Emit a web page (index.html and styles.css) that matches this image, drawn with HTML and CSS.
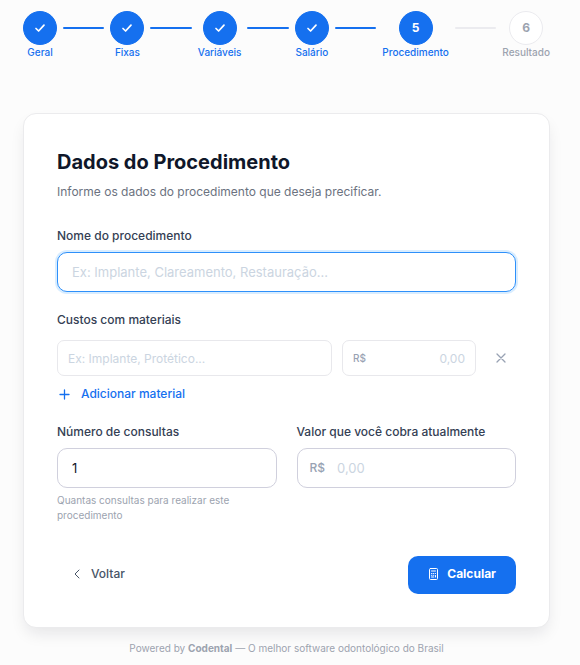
FILE: index.html
```html
<!DOCTYPE html>
<html lang="pt-BR">
<head>
<meta charset="utf-8">
<meta name="viewport" content="width=device-width, initial-scale=1">
<title>Dados do Procedimento</title>
<link rel="stylesheet" href="styles.css">
</head>
<body>

<div class="page">
  <ol class="stepper">
    <li class="step done">
      <span class="circle"><svg width="12" height="12" viewBox="0 0 12 12"><path d="M2 6.5 L4.6 9 L10 3.2"/></svg></span>
      <span class="step-label">Geral</span>
    </li>
    <li class="line done" aria-hidden="true"></li>
    <li class="step done">
      <span class="circle"><svg width="12" height="12" viewBox="0 0 12 12"><path d="M2 6.5 L4.6 9 L10 3.2"/></svg></span>
      <span class="step-label">Fixas</span>
    </li>
    <li class="line done" aria-hidden="true"></li>
    <li class="step done">
      <span class="circle"><svg width="12" height="12" viewBox="0 0 12 12"><path d="M2 6.5 L4.6 9 L10 3.2"/></svg></span>
      <span class="step-label">Variáveis</span>
    </li>
    <li class="line done" aria-hidden="true"></li>
    <li class="step done">
      <span class="circle"><svg width="12" height="12" viewBox="0 0 12 12"><path d="M2 6.5 L4.6 9 L10 3.2"/></svg></span>
      <span class="step-label">Salário</span>
    </li>
    <li class="line done" aria-hidden="true"></li>
    <li class="step done" aria-current="step">
      <span class="circle">5</span>
      <span class="step-label">Procedimento</span>
    </li>
    <li class="line" aria-hidden="true"></li>
    <li class="step">
      <span class="circle">6</span>
      <span class="step-label">Resultado</span>
    </li>
  </ol>

  <form class="card">
    <h1>Dados do Procedimento</h1>
    <p class="subtitle">Informe os dados do procedimento que deseja precificar.</p>

    <div class="field">
      <label for="nome">Nome do procedimento</label>
      <input type="text" id="nome" class="input active" placeholder="Ex: Implante, Clareamento, Restauração...">
    </div>

    <div class="materials">
      <label for="material">Custos com materiais</label>
      <div class="material-row">
        <input type="text" id="material" class="input small" placeholder="Ex: Implante, Protético...">
        <div class="money small">
          <label class="prefix" for="custo">R$</label>
          <input type="text" id="custo" placeholder="0,00">
        </div>
        <button type="button" class="remove" aria-label="Remover material">
          <svg width="10" height="10" viewBox="0 0 10 10"><path d="M1 1 L9 9 M9 1 L1 9"/></svg>
        </button>
      </div>
      <button type="button" class="add">
        <svg width="11" height="12" viewBox="0 0 11 12"><path d="M5.5 2 V11 M1 6.5 H10"/></svg>
        Adicionar material
      </button>
    </div>

    <div class="columns">
      <div class="field">
        <label for="consultas">Número de consultas</label>
        <input type="text" id="consultas" class="input" value="1" inputmode="numeric">
        <p class="help">Quantas consultas para realizar este procedimento</p>
      </div>
      <div class="field">
        <label for="valor">Valor que você cobra atualmente</label>
        <div class="money">
          <label class="prefix" for="valor">R$</label>
          <input type="text" id="valor" placeholder="0,00">
        </div>
      </div>
    </div>

    <div class="actions">
      <button type="button" class="back">
        <svg width="8" height="10" viewBox="0 0 8 10"><path d="M6 1 L2 5 L6 9"/></svg>
        Voltar
      </button>
      <button type="button" class="submit">
        <svg width="11" height="12" viewBox="0 0 11 12">
          <rect x="1.5" y="0.5" width="8" height="11" rx="1"/>
          <path d="M3.5 3 H7.5 M3.5 5.5 H4 M5.5 5.5 H5.8 M7.3 5.5 H7.5 M3.5 7.3 H4 M5.5 7.3 H5.8 M3.5 9 H5.8 M7.5 7.5 V9"/>
        </svg>
        Calcular
      </button>
    </div>
  </form>

  <footer>Powered by <strong>Codental</strong> — O melhor software odontológico do Brasil</footer>
</div>

</body>
</html>
```
FILE: styles.css
```css
* {
  box-sizing: border-box;
}

body {
  margin: 0;
  background-color: #fcfcfc;
  color: #0f172a;
  font-family: Inter, "Liberation Sans", sans-serif;
  font-size: 12px;
  line-height: 18px;
}

.page {
  padding: 11px 30px 8px 23px;
}

h1, p {
  margin: 0;
}

button, input {
  font-family: inherit;
}

button {
  display: flex;
  align-items: center;
  border: none;
  background: none;
  padding: 0;
  font-size: 12px;
  line-height: 18px;
  font-weight: 500;
  cursor: pointer;
}

svg {
  display: block;
  fill: none;
  stroke: currentColor;
  stroke-linecap: round;
  stroke-linejoin: round;
}

/* stepper */
.stepper {
  display: flex;
  list-style: none;
  margin: 0 0 53px;
  padding: 0;
}

.step {
  display: flex;
  flex-direction: column;
  align-items: center;
  color: #9ca3af;
}

.circle {
  display: flex;
  align-items: center;
  justify-content: center;
  width: 34px;
  height: 34px;
  border: 1px solid #ebebef;
  border-radius: 50%;
  background-color: #fff;
  font-weight: 700;
}

.circle svg {
  stroke-width: 1.7;
}

.step.done {
  color: #1570ef;
}

.step.done .circle {
  border-color: #1570ef;
  background-color: #1570ef;
  color: #fff;
}

.step-label {
  font-size: 10px;
  line-height: 15px;
  font-weight: 500;
}

.line {
  flex: 1;
  height: 2px;
  margin: 16px 6px 0;
  border-radius: 1px;
  background-color: #ebebef;
}

.line.done {
  background-color: #1570ef;
}

/* card */
.card {
  padding: 33px;
  border: 1px solid #ebebed;
  border-radius: 13px;
  background-color: #fff;
  box-shadow: 0 8px 16px -3px rgba(16, 24, 40, 0.1);
}

h1 {
  font-size: 20px;
  line-height: 30px;
  font-weight: 700;
}

.subtitle {
  margin: 6px 0 26px;
  color: #6b7280;
}

label {
  display: block;
  color: #344054;
  font-weight: 500;
}

.field > label {
  margin-bottom: 7px;
}

.input, .money {
  width: 100%;
  height: 40px;
  border: 1px solid #d0d0dd;
  border-radius: 10px;
  background-color: #fff;
}

.input {
  display: block;
  padding: 0 14px;
}

input {
  color: #0f172a;
  font-size: 13px;
  outline: none;
}

input::placeholder {
  color: #cbd5e1;
  opacity: 1;
}

.input.active {
  border-color: #2e90fa;
  box-shadow: 0 0 0 2px #d9edff;
}

.money {
  display: flex;
  align-items: center;
  gap: 12px;
  padding: 0 12px;
}

.money input {
  flex: 1;
  min-width: 0;
  padding: 0;
  border: none;
  background: none;
}

.prefix {
  color: #98a2b3;
}

/* materials */
.materials {
  margin: 19px 0 20px;
}

.material-row {
  display: grid;
  grid-template-columns: minmax(0, 1fr) 134px 30px;
  gap: 10px;
  margin: 11px 0 9px;
}

.input.small, .money.small {
  height: 36px;
  padding: 0 10px;
  border-color: #e8e8ec;
  border-radius: 7px;
}

.input.small, .money.small input {
  font-size: 12px;
}

.money.small input {
  text-align: right;
}

.money.small .prefix {
  font-size: 10px;
}

.remove {
  justify-content: center;
  color: #98a2b3;
}

.remove svg, .add svg {
  stroke-width: 1.3;
}

.add {
  gap: 11px;
  padding-left: 2px;
  color: #1570ef;
}

.columns {
  display: grid;
  grid-template-columns: repeat(2, minmax(0, 1fr));
  gap: 20px;
}

.help {
  margin-top: 5px;
  color: #9ca3af;
  font-size: 10px;
  line-height: 15px;
}

.actions {
  display: flex;
  justify-content: space-between;
  align-items: flex-start;
  margin-top: 33px;
}

.back {
  gap: 10px;
  padding: 9px 16px;
  color: #475467;
}

.submit {
  gap: 8px;
  padding: 9px 20px 11px;
  border-radius: 10px;
  background-color: #1570ef;
  color: #fff;
  font-weight: 700;
}

footer {
  margin-top: 11px;
  color: #9ca3af;
  font-size: 10px;
  text-align: center;
}
```
